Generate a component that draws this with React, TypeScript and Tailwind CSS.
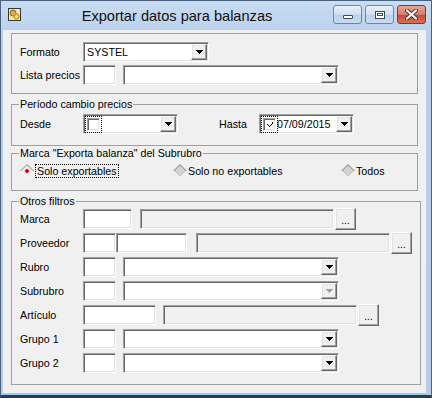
import React from "react";

const sunken =
  "border border-t-[#a0a0a0] border-l-[#a0a0a0] border-b-white border-r-white shadow-[inset_1px_1px_0_#696969,inset_-1px_-1px_0_#e3e3e3]";
const raised =
  "border border-t-white border-l-white border-b-[#696969] border-r-[#696969] shadow-[inset_-1px_-1px_0_#a0a0a0,inset_1px_1px_0_#e3e3e3] bg-[#f0f0f0]";

function Arrow({ disabled }: { disabled?: boolean }) {
  return (
    <svg width="8" height="5" viewBox="0 0 8 5" shapeRendering="crispEdges">
      {disabled && (
        <path d="M1 1h7v1h-1v1h-1v1h-1v1h-1v-1h-1v-1h-1v-1h-1z" fill="#ffffff" />
      )}
      <path
        d="M0 0h7v1h-1v1h-1v1h-1v1h-1v-1h-1v-1h-1v-1h-1z"
        fill={disabled ? "#a0a0a0" : "#000000"}
      />
    </svg>
  );
}

function DropBtn({ disabled }: { disabled?: boolean }) {
  return (
    <div className={`ml-auto w-[16px] h-full flex items-center justify-center pl-px ${raised}`}>
      <Arrow disabled={disabled} />
    </div>
  );
}

function Combo({ className = "", text = "", disabled }: { className?: string; text?: string; disabled?: boolean }) {
  return (
    <div className={`h-[20px] bg-white p-px flex items-center ${sunken} ${className}`}>
      {text && <span className="pl-[2px] text-[10.7px] leading-[13px]">{text}</span>}
      <DropBtn disabled={disabled} />
    </div>
  );
}

function Edit({ className = "", disabled }: { className?: string; disabled?: boolean }) {
  return <div className={`h-[20px] ${disabled ? "bg-[#f0f0f0]" : "bg-white"} ${sunken} ${className}`} />;
}

function Dots({ className = "" }: { className?: string }) {
  return (
    <div className={`w-[21px] h-[22px] flex items-center justify-center text-[10px] leading-[10px] ${raised} ${className}`}>
      <span className="mt-[3px]">...</span>
    </div>
  );
}

function Check({ checked }: { checked?: boolean }) {
  return (
    <div className="border border-dotted border-black p-px">
      <div className={`w-[13px] h-[13px] bg-white flex items-center justify-center ${sunken}`}>
        {checked && (
          <svg width="7" height="7" viewBox="0 0 7 7" shapeRendering="crispEdges">
            <path d="M6 1h1v2h-1v1h-1v1h-1v1h-1v-1h-1v-1h-1v-1h1v1h1v1h1v-1h1v-1h1z" fill="#000" />
          </svg>
        )}
      </div>
    </div>
  );
}

function DatePick({ checked, text }: { checked?: boolean; text?: string }) {
  return (
    <div className={`w-[95px] h-[20px] bg-white p-px flex items-center ${sunken}`}>
      <Check checked={checked} />
      {text && <span className="text-[10.7px] leading-[13px] ml-[-1px]">{text}</span>}
      <DropBtn />
    </div>
  );
}

function Diamond({ selected }: { selected?: boolean }) {
  return (
    <svg width="14" height="14" viewBox="0 0 14 14">
      <polygon points="7,0.5 13.5,7 7,13.5 0.5,7" fill={selected ? "#e8e8e8" : "#c4c4c4"} />
      <polyline points="0.5,7 7,0.5 13.5,7" fill="none" stroke="#8a8a8a" strokeWidth="1" />
      <polyline points="13.5,7 7,13.5 0.5,7" fill="none" stroke="#ffffff" strokeWidth="1" />
      <polygon points="7,2.5 11.5,7 7,11.5 2.5,7" fill={selected ? "#f4f4f4" : "#d4d4d4"} />
      {selected && <polygon points="7,4.5 9.5,7 7,9.5 4.5,7" fill="#e00000" />}
    </svg>
  );
}

function Row({ label, children }: { label: string; children: React.ReactNode }) {
  return (
    <div className="flex items-center h-[20px]">
      <div className="w-[63px] text-[10.7px] leading-[13px]">{label}</div>
      {children}
    </div>
  );
}

function Legend({ children }: { children: React.ReactNode }) {
  return <legend className="px-px -ml-px text-[10.7px] leading-[13px]">{children}</legend>;
}

function AppIcon() {
  return (
    <svg width="13" height="13" viewBox="0 0 13 13">
      <rect x="0.5" y="0.5" width="12" height="12" fill="#efe9c8" stroke="#3a3a3a" />
      <circle cx="5" cy="5" r="2.6" fill="none" stroke="#b07a10" strokeWidth="1.6" />
      <circle cx="8.5" cy="8.5" r="2.4" fill="none" stroke="#d9a520" strokeWidth="1.6" />
      <circle cx="5" cy="5" r="0.8" fill="#7a5205" />
    </svg>
  );
}

function TitleButtons() {
  return (
    <div className="flex gap-[3px] mt-[4px] mr-[5px]">
      <div className="w-[29px] h-[19px] rounded-[3px] border border-[#6a86a8] bg-[linear-gradient(#eaf1fa,#cfdff1_50%,#b9cfe9_51%,#c9dcf1)] flex items-end justify-center pb-[4px]">
        <div className="w-[10px] h-[4px] bg-white border border-[#3b4a5c] rounded-[1px]" />
      </div>
      <div className="w-[29px] h-[19px] rounded-[3px] border border-[#6a86a8] bg-[linear-gradient(#eaf1fa,#cfdff1_50%,#b9cfe9_51%,#c9dcf1)] flex items-center justify-center">
        <div className="w-[10px] h-[8px] border border-[#3b4a5c] bg-white flex items-center justify-center">
          <div className="w-[6px] h-[3px] border border-[#3b4a5c] bg-white" />
        </div>
      </div>
      <div className="w-[29px] h-[19px] rounded-[3px] border border-[#7d3a2c] bg-[linear-gradient(#e8a493,#d77b68_50%,#c44a34_51%,#d6705a)] flex items-center justify-center">
        <svg width="13" height="11" viewBox="0 0 13 11">
          <path d="M2 1.5 L11 9.5 M11 1.5 L2 9.5" stroke="#5a2a20" strokeWidth="4" strokeLinecap="round" />
          <path d="M2 1.5 L11 9.5 M11 1.5 L2 9.5" stroke="#ffffff" strokeWidth="2.2" strokeLinecap="round" />
        </svg>
      </div>
    </div>
  );
}

export default function App() {
  return (
    <div className="w-[432px] h-[398px] flex flex-col bg-[linear-gradient(#c8dcf2,#b8cfea_40px,#b6cde9)] border-l border-t border-r border-b-[3px] border-[#4a6180] border-b-[#2b3a4c] font-['Liberation_Sans',Arial,sans-serif] text-black overflow-hidden">
      {/* Title bar */}
      <div className="h-[29px] flex items-start shrink-0">
        <div className="ml-[7px] mt-[7px]">
          <AppIcon />
        </div>
        <div className="flex-1 text-center text-[14.6px] leading-[18px] mt-[6px] text-[#111]">
          Exportar datos para balanzas
        </div>
        <TitleButtons />
      </div>
      {/* Client */}
      <div className="flex-1 ml-[2px] mr-[5px] bg-[#f0f0f0] px-[8px] pt-[3px]">
        {/* Group 1 */}
        <fieldset className="h-[61px] border border-[#a0a0a0] px-[8px] pt-[8px] flex flex-col gap-[3px]">
          <Row label="Formato">
            <Combo className="w-[126px]" text="SYSTEL" />
          </Row>
          <Row label="Lista precios">
            <Edit className="w-[33px]" />
            <Combo className="w-[216px] ml-[7px]" />
          </Row>
        </fieldset>

        {/* Group 2 */}
        <fieldset className="mt-[4px] h-[48px] border border-[#a0a0a0] px-[8px]">
          <Legend>Período cambio precios</Legend>
          <div className="mt-[3px]">
            <Row label="Desde">
              <DatePick />
              <div className="ml-[41px] w-[40px] text-[10.7px] leading-[13px]">Hasta</div>
              <DatePick checked text="07/09/2015" />
            </Row>
          </div>
        </fieldset>

        {/* Group 3 */}
        <fieldset className="mt-[1px] h-[44px] border border-[#a0a0a0] px-[8px]">
          <Legend>Marca "Exporta balanza" del Subrubro</Legend>
          <div className="mt-[4px] flex items-center h-[14px] text-[10.7px] leading-[13px]">
            <div className="w-[153px] flex items-center">
              <Diamond selected />
              <span className="ml-px border border-dotted border-black px-px leading-[12px]">Solo exportables</span>
            </div>
            <div className="w-[168px] flex items-center">
              <Diamond />
              <span className="ml-px">Solo no exportables</span>
            </div>
            <div className="flex items-center">
              <Diamond />
              <span className="ml-px">Todos</span>
            </div>
          </div>
        </fieldset>

        {/* Group 4 */}
        <fieldset className="mt-[4px] h-[190px] border border-[#a0a0a0] px-[8px]">
          <Legend>Otros filtros</Legend>
          <div className="mt-px flex flex-col gap-[4px]">
            <Row label="Marca">
              <Edit className="w-[49px]" />
              <Edit className="w-[194px] ml-[8px]" disabled />
              <Dots className="ml-px" />
            </Row>
            <Row label="Proveedor">
              <Edit className="w-[33px]" />
              <Edit className="w-[71px]" />
              <Edit className="w-[194px] ml-[9px]" disabled />
              <Dots className="ml-px" />
            </Row>
            <Row label="Rubro">
              <Edit className="w-[33px]" />
              <Combo className="w-[216px] ml-[7px]" />
            </Row>
            <Row label="Subrubro">
              <Edit className="w-[33px]" />
              <Combo className="w-[216px] ml-[7px]" disabled />
            </Row>
            <Row label="Artículo">
              <Edit className="w-[73px]" />
              <Edit className="w-[194px] ml-[7px]" disabled />
              <Dots className="ml-px" />
            </Row>
            <Row label="Grupo 1">
              <Edit className="w-[33px]" />
              <Combo className="w-[216px] ml-[7px]" />
            </Row>
            <Row label="Grupo 2">
              <Edit className="w-[33px]" />
              <Combo className="w-[216px] ml-[7px]" />
            </Row>
          </div>
        </fieldset>
      </div>
      <div className="h-[2px] ml-[2px] mr-[5px] bg-[#8fd0ee] shrink-0" />
    </div>
  );
}
